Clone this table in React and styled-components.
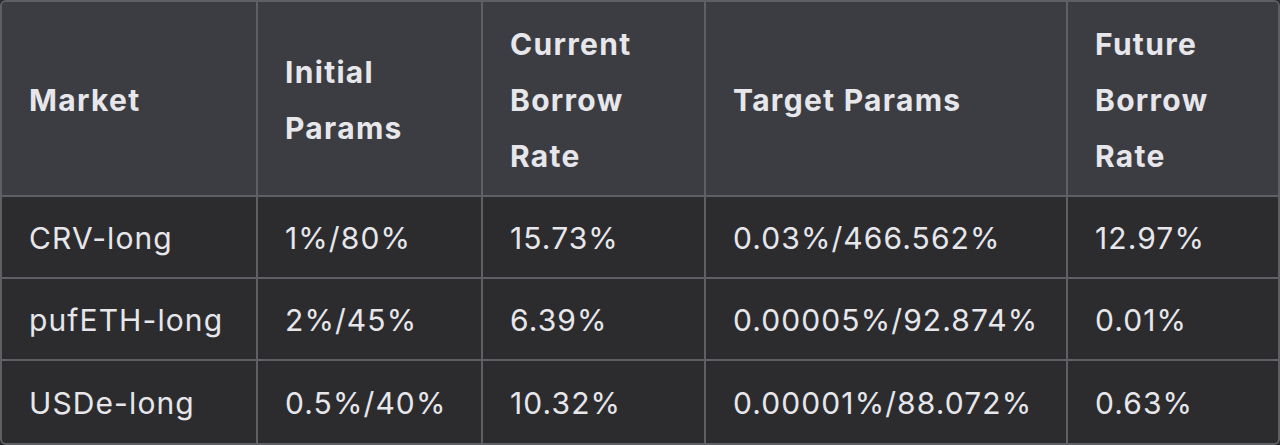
import React from "react";
import styled, { createGlobalStyle } from "styled-components";

const Global = createGlobalStyle`
  html, body { margin: 0; padding: 0; background: #2a2a2d; }
  body { font-family: Inter, "Noto Sans", "Liberation Sans", sans-serif; }
`;

const Wrap = styled.div`
  width: 1280px;
  height: 445px;
  box-sizing: border-box;
  border: 2px solid #5f5f66;
  border-radius: 6px;
  overflow: hidden;
  background: #2c2c2f;
`;

const Table = styled.table`
  width: 100%;
  border-collapse: separate;
  border-spacing: 0;
  table-layout: fixed;
  color: #e7e7eb;
  font-size: 30px;
`;

const Th = styled.th`
  background: #3c3d42;
  text-align: left;
  font-weight: 700;
  letter-spacing: 1.3px;
  line-height: 56px;
  height: 195px;
  padding: 2px 16px 0 27px;
  box-sizing: border-box;
  vertical-align: middle;
  border-right: ${(p) => (p.$last ? "none" : "2px solid #5f5f66")};
  border-bottom: 2px solid #5f5f66;
`;

const Td = styled.td`
  text-align: left;
  font-weight: 400;
  letter-spacing: 1.1px;
  line-height: 56px;
  height: 82px;
  padding: 2px 8px 0 27px;
  box-sizing: border-box;
  white-space: nowrap;
  border-right: ${(p) => (p.$last ? "none" : "2px solid #5f5f66")};
  border-bottom: ${(p) => (p.$lastRow ? "none" : "2px solid #5f5f66")};
`;

const widths = [256, 225, 223, 362, 210];
const headers = [
  ["Market"],
  ["Initial", "Params"],
  ["Current", "Borrow", "Rate"],
  ["Target Params"],
  ["Future", "Borrow", "Rate"],
];
const rows = [
  ["CRV-long", "1%/80%", "15.73%", "0.03%/466.562%", "12.97%"],
  ["pufETH-long", "2%/45%", "6.39%", "0.00005%/92.874%", "0.01%"],
  ["USDe-long", "0.5%/40%", "10.32%", "0.00001%/88.072%", "0.63%"],
];

export default function App() {
  return (
    <>
      <Global />
      <Wrap>
        <Table>
          <colgroup>
            {widths.map((w, i) => (
              <col key={i} style={{ width: w }} />
            ))}
          </colgroup>
          <thead>
            <tr>
              {headers.map((h, i) => (
                <Th key={i} $last={i === headers.length - 1}>
                  {h.map((line, j) => (
                    <React.Fragment key={j}>
                      {j > 0 && <br />}
                      {line}
                    </React.Fragment>
                  ))}
                </Th>
              ))}
            </tr>
          </thead>
          <tbody>
            {rows.map((r, ri) => (
              <tr key={ri}>
                {r.map((c, ci) => (
                  <Td key={ci} $last={ci === r.length - 1} $lastRow={ri === rows.length - 1}>
                    {c}
                  </Td>
                ))}
              </tr>
            ))}
          </tbody>
        </Table>
      </Wrap>
    </>
  );
}
